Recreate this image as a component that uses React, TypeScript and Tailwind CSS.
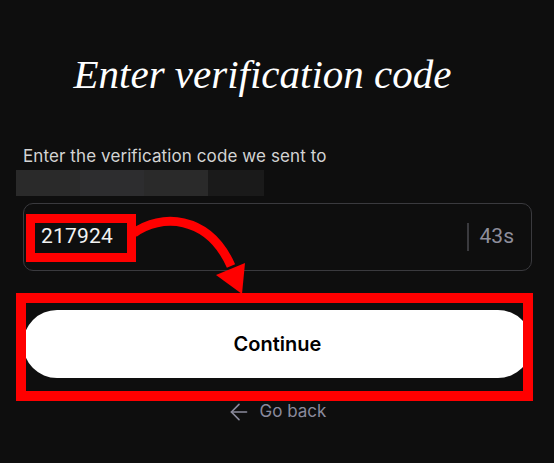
import { ArrowLeft } from "lucide-react";

export default function App() {
  return (
    <div className="relative min-h-[463px] w-full overflow-hidden bg-[#0e0e0e] font-['Inter','Roboto',sans-serif]">
      <div className="flex flex-col px-[23px] pr-[22px]">
        {/* Title */}
        <h1 className="pr-[30px] pt-[46px] text-center font-['Liberation_Serif',serif] text-[41px] italic leading-[56px] text-white">
          Enter verification code
        </h1>

        {/* Sent to */}
        <p className="mt-[44px] text-[17px] leading-[20px] tracking-[0.1px] text-[#d4d4d4]">
          Enter the verification code we sent to
        </p>
        <div className="-ml-[7px] mt-[4px] flex h-[26px] w-[248px]">
          <div className="w-[64px] bg-[#2a2a2a]" />
          <div className="w-[64px] bg-[#2d2d2f]" />
          <div className="w-[64px] bg-[#2a2a2a]" />
          <div className="flex-1 bg-[#1a1a1a]" />
        </div>

        {/* Code input */}
        <div className="mt-[7px] flex h-[68px] items-center rounded-[10px] border-[1.5px] border-[#3a3a3e] pl-[17px] pr-[17px] font-['Roboto',sans-serif]">
          <span className="flex-1 text-[21px] tracking-[0.2px] text-[#f2f2f2]">217924</span>
          <div className="h-[28px] w-[1.5px] bg-[#3a3a3e]" />
          <span className="ml-[11px] text-[21px] text-[#8e8e9c]">43s</span>
        </div>

        {/* Continue */}
        <button className="mt-[39px] flex h-[68px] items-center justify-center rounded-full bg-white text-[20px] font-semibold text-black">
          Continue
        </button>

        {/* Go back */}
        <div className="mt-[21px] flex items-center justify-center gap-[8px] pr-[3px] text-[17px] text-[#8a8a9c]">
          <ArrowLeft className="h-[26px] w-[26px]" strokeWidth={1.5} />
          <span>Go back</span>
        </div>
      </div>

      {/* Annotation overlay */}
      <div className="pointer-events-none absolute left-[26px] top-[214px] h-[48px] w-[110px] border-[9px] border-[#ff0000]" />
      <div className="pointer-events-none absolute left-[16px] top-[293px] h-[108px] w-[517px] border-[10px] border-[#ff0000]" />
      <svg className="pointer-events-none absolute left-0 top-0" width="554" height="463" viewBox="0 0 554 463">
        <path d="M134 233 C160 214, 208 214, 231 266" fill="none" stroke="#ff0000" strokeWidth="9" />
        <polygon points="216,275 245,263 242,294" fill="#ff0000" />
      </svg>
    </div>
  );
}
